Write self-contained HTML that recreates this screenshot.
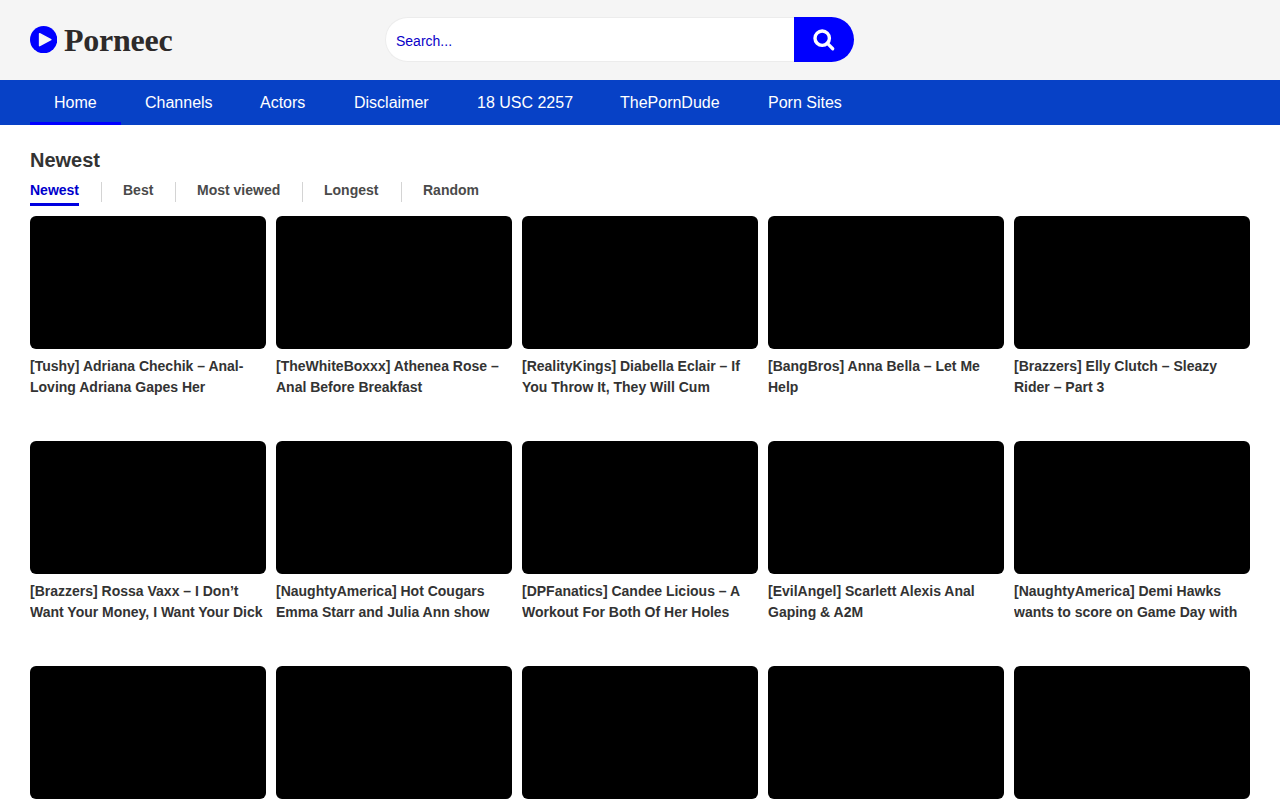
<!DOCTYPE html>
<html lang="en">
<head>
<meta charset="utf-8">
<title>Porneec</title>
<style>
*{box-sizing:border-box;margin:0;padding:0}
html,body{width:1280px;height:800px;overflow:hidden;background:#fff}
body{font-family:"Liberation Sans",sans-serif;color:#333;position:relative}
.header{position:absolute;left:0;top:0;width:1280px;height:80px;background:#f5f5f5}
.logo{position:absolute;left:30.2px;top:25.9px;width:27.3px;height:27.3px}
.brand{position:absolute;left:64px;top:22px;letter-spacing:-0.25px;font-family:"Liberation Serif",serif;font-weight:bold;font-size:32px;line-height:37px;color:#2d2a2a;white-space:nowrap}
.search{position:absolute;left:385px;top:17px;width:409px;height:45px;background:#fff;border:1px solid #ececec;border-right:0;border-radius:23px 0 0 23px}
.search span{position:absolute;left:10px;top:15px;font-size:14px;line-height:16px;color:#0a00c8}
.sbtn{position:absolute;left:794px;top:17px;width:60px;height:45px;background:#0000ff;border-radius:0 23px 23px 0}
.sbtn svg{position:absolute;left:0;top:0;width:60px;height:45px}
.nav{position:absolute;left:0;top:80px;width:1280px;height:45px;background:#0741c6}
.nav a{position:absolute;top:1px;height:45px;line-height:44px;font-size:16px;color:#fff;text-decoration:none;white-space:nowrap}
.nav .ul{position:absolute;left:30px;top:42px;width:91px;height:3px;background:#0000ff}
h1{position:absolute;left:30px;top:148px;font-size:20px;line-height:24px;font-weight:bold;color:#333}
.tabs a{position:absolute;top:181px;font-size:14px;line-height:18px;font-weight:bold;color:#4a4a4a;text-decoration:none;white-space:nowrap}
.tabs a.on{color:#0000cc}
.tabs i{position:absolute;top:182px;width:1px;height:20px;background:#d4d4d4}
.tabs b{position:absolute;left:30px;top:203px;width:49px;height:3px;background:#0000e0}
.card{position:absolute;width:236px}
.card .th{width:236px;height:133px;background:#000;border-radius:6px}
.card .t{position:absolute;left:0;top:140px;width:260px;height:42px;overflow:hidden;font-size:14px;line-height:21px;font-weight:bold;color:#333;white-space:nowrap}
</style>
</head>
<body>
<div class="header">
  <svg class="logo" viewBox="0 0 27 27"><circle cx="13.5" cy="13.5" r="13.5" fill="#0000ff"/><path d="M9.500 7.600 L20.600 13.500 L9.500 19.400 Z" fill="#f5f5f5" stroke="#f5f5f5" stroke-width="1.500" stroke-linejoin="round"/></svg>
  <div class="brand">Porneec</div>
  <div class="search"><span>Search...</span></div>
  <div class="sbtn"><svg viewBox="0 0 60 45"><circle cx="28.2" cy="21.2" r="7.2" fill="none" stroke="#fff" stroke-width="3.4"/><path d="M33.200 26.200 L38.750 31.750" stroke="#fff" stroke-width="3.200" stroke-linecap="round" fill="none"/></svg></div>
</div>
<div class="nav">
  <a style="left:54px">Home</a>
  <a style="left:145px">Channels</a>
  <a style="left:260px">Actors</a>
  <a style="left:354px">Disclaimer</a>
  <a style="left:477px">18 USC 2257</a>
  <a style="left:620px">ThePornDude</a>
  <a style="left:768px">Porn Sites</a>
  <div class="ul"></div>
</div>
<h1>Newest</h1>
<div class="tabs">
  <a class="on" style="left:30px">Newest</a>
  <i style="left:101px"></i>
  <a style="left:123px">Best</a>
  <i style="left:175px"></i>
  <a style="left:197px">Most viewed</a>
  <i style="left:302px"></i>
  <a style="left:324px">Longest</a>
  <i style="left:401px"></i>
  <a style="left:423px">Random</a>
  <b></b>
</div>

<div class="card" style="left:30px;top:216px"><div class="th"></div><div class="t">[Tushy] Adriana Chechik – Anal-<br>Loving Adriana Gapes Her</div></div>
<div class="card" style="left:276px;top:216px"><div class="th"></div><div class="t">[TheWhiteBoxxx] Athenea Rose –<br>Anal Before Breakfast</div></div>
<div class="card" style="left:522px;top:216px"><div class="th"></div><div class="t">[RealityKings] Diabella Eclair – If<br>You Throw It, They Will Cum</div></div>
<div class="card" style="left:768px;top:216px"><div class="th"></div><div class="t">[BangBros] Anna Bella – Let Me<br>Help</div></div>
<div class="card" style="left:1014px;top:216px"><div class="th"></div><div class="t">[Brazzers] Elly Clutch – Sleazy<br>Rider – Part 3</div></div>

<div class="card" style="left:30px;top:441px"><div class="th"></div><div class="t">[Brazzers] Rossa Vaxx – I Don’t<br>Want Your Money, I Want Your Dick</div></div>
<div class="card" style="left:276px;top:441px"><div class="th"></div><div class="t">[NaughtyAmerica] Hot Cougars<br>Emma Starr and Julia Ann show</div></div>
<div class="card" style="left:522px;top:441px"><div class="th"></div><div class="t">[DPFanatics] Candee Licious – A<br>Workout For Both Of Her Holes</div></div>
<div class="card" style="left:768px;top:441px"><div class="th"></div><div class="t">[EvilAngel] Scarlett Alexis Anal<br>Gaping &amp; A2M</div></div>
<div class="card" style="left:1014px;top:441px"><div class="th"></div><div class="t">[NaughtyAmerica] Demi Hawks<br>wants to score on Game Day with</div></div>

<div class="card" style="left:30px;top:666px"><div class="th"></div></div>
<div class="card" style="left:276px;top:666px"><div class="th"></div></div>
<div class="card" style="left:522px;top:666px"><div class="th"></div></div>
<div class="card" style="left:768px;top:666px"><div class="th"></div></div>
<div class="card" style="left:1014px;top:666px"><div class="th"></div></div>
</body>
</html>
